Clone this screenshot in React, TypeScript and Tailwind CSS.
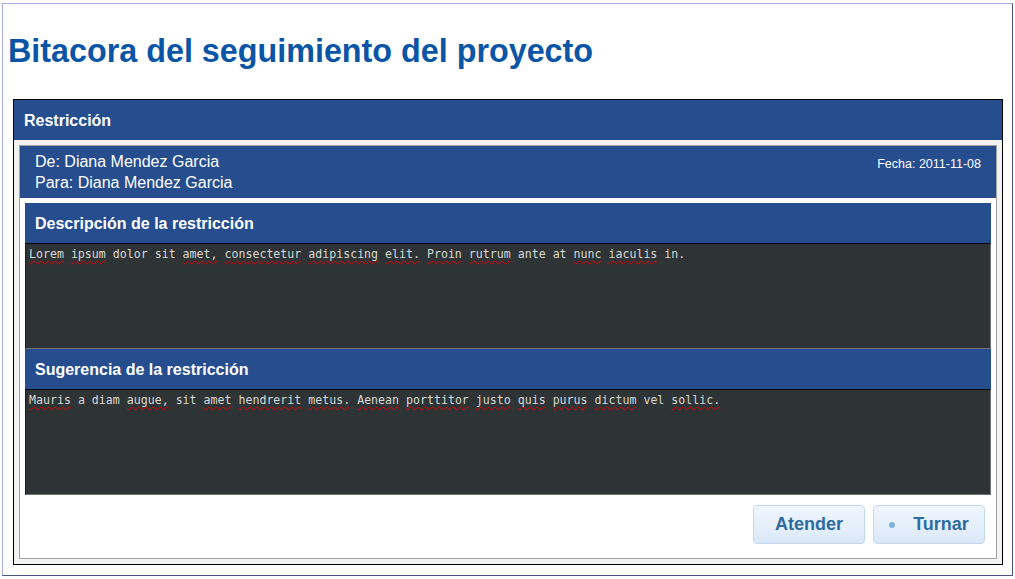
const spell = "underline decoration-wavy decoration-[#e00000] decoration-1 underline-offset-2";

function Mono({ words }: { words: [string, boolean][] }) {
  return (
    <>
      {words.map(([w, bad], i) => (
        <span key={i}>
          {i > 0 && " "}
          {bad ? <span className={spell}>{w}</span> : w}
        </span>
      ))}
    </>
  );
}

const desc: [string, boolean][] = [
  ["Lorem", true], ["ipsum", true], ["dolor", false], ["sit", false], ["amet,", true],
  ["consectetur", true], ["adipiscing", true], ["elit.", true], ["Proin", true], ["rutrum", true],
  ["ante", false], ["at", false], ["nunc", true], ["iaculis", true], ["in.", false],
];

const sug: [string, boolean][] = [
  ["Mauris", true], ["a", false], ["diam", false], ["augue,", true], ["sit", false], ["amet", true],
  ["hendrerit", true], ["metus.", true], ["Aenean", true], ["porttitor", true], ["justo", true],
  ["quis", true], ["purus", true], ["dictum", true], ["vel", false], ["sollic.", true],
];

function Section({ title, words }: { title: string; words: [string, boolean][] }) {
  return (
    <div>
      <div className="h-[40px] bg-[#264d8e] flex items-center pl-[10px] pt-[2px] text-white font-bold text-[16px]">
        {title}
      </div>
      <div className="h-[106px] bg-[#2e3336] border border-t-[#050505] border-l-[#1a1c1d] border-r-[#727272] border-b-[#727272] pt-[3px] px-[3px] font-['DejaVu_Sans_Mono',monospace] text-[11.6px] leading-[14px] text-[#d6d8d3] whitespace-pre">
        <Mono words={words} />
      </div>
    </div>
  );
}

function Btn({ label, dot }: { label: string; dot?: boolean }) {
  return (
    <button className="w-[112px] h-[39px] rounded-[4px] border border-[#c3d8ee] bg-gradient-to-b from-[#eef5fd] via-[#e6f0fb] to-[#d9e8f7] flex items-center justify-center gap-[18px] text-[18px] font-bold text-[#2d6ca3]">
      {dot && <span className="w-[6px] h-[6px] rounded-full bg-[#7eb0de]" />}
      {label}
    </button>
  );
}

export default function App() {
  return (
    <div className="w-[1015px] h-[579px] bg-white pt-[3px] pl-[2px] font-['Liberation_Sans',Arial,sans-serif]">
      <div className="w-[1011px] h-[573px] border border-l-[#a9abe0] border-t-[#a9abe0] border-r-[#4b5582] border-b-[#4b5582]">
        <h1 className="mt-[31px] mb-[32px] pl-[5px] text-[32.3px] leading-[32px] font-bold text-[#0b55a6]">
          Bitacora del seguimiento del proyecto
        </h1>
        <div className="ml-[10px] w-[990px] border border-black">
          <div className="h-[40px] bg-[#264d8e] flex items-center pl-[10px] pt-[2px] text-white font-bold text-[16px]">
            Restricción
          </div>
          <div className="bg-[#f2f2f2] p-[5px]">
            <div className="border border-[#a3a3a3] bg-white">
              <div className="bg-[#264d8e] text-white flex justify-between pt-[5px] pb-[5px] pl-[15px] pr-[15px]">
                <div className="text-[16px] leading-[21px]">
                  <div>De: Diana Mendez Garcia</div>
                  <div>Para: Diana Mendez Garcia</div>
                </div>
                <div className="text-[12.5px] leading-[16px] mt-[5px]">Fecha: 2011-11-08</div>
              </div>
              <div className="px-[5px] pt-[5px]">
                <Section title="Descripción de la restricción" words={desc} />
                <Section title="Sugerencia de la restricción" words={sug} />
              </div>
              <div className="flex justify-end gap-[8px] pt-[10px] pb-[14px] pr-[11px]">
                <Btn label="Atender" />
                <Btn label="Turnar" dot />
              </div>
            </div>
          </div>
        </div>
      </div>
    </div>
  );
}
